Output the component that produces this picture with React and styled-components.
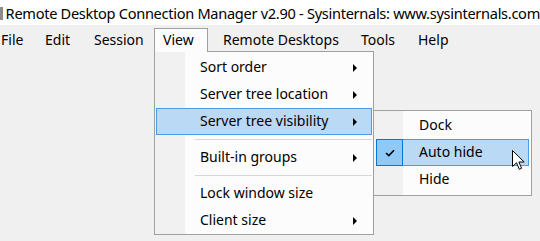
import React from 'react';
import styled, { createGlobalStyle } from 'styled-components';

const Global = createGlobalStyle`
  html, body { margin: 0; padding: 0; background: #f0f0f0; }
  body {
    width: 540px; height: 241px; overflow: hidden;
    font-family: "Segoe UI", "Noto Sans", sans-serif;
    color: #000;
  }
`;

const Window = styled.div`
  position: relative;
  width: 540px;
  height: 241px;
  display: flex;
  flex-direction: column;
  background: #f0f0f0;
  overflow: hidden;
`;

const TitleBar = styled.div`
  height: 25px;
  flex: none;
  background: #fff;
  display: flex;
  align-items: center;
`;

const AppIcon = styled.div`
  width: 4px;
  height: 13px;
  margin-top: 2px;
  background: #8c8c8c;
`;

const Title = styled.span`
  margin-left: 3px;
  font-size: 14.6px;
  letter-spacing: -0.3px;
  white-space: nowrap;
`;

const MenuBar = styled.div`
  height: 27px;
  flex: none;
  display: flex;
  align-items: flex-end;
  margin-left: -9px;
`;

const MenuItem = styled.div`
  position: relative;
  z-index: ${p => (p.$open ? 3 : 1)};
  box-sizing: border-box;
  width: ${p => p.$w}px;
  height: 24px;
  padding-left: ${p => p.$pl}px;
  padding-bottom: 2px;
  display: flex;
  align-items: center;
  font-size: 14px;
  white-space: nowrap;
  border: 1px solid ${p => (p.$open ? '#a0a0a0' : 'transparent')};
  border-bottom: none;
  background: ${p => (p.$open ? '#fcfcfc' : 'transparent')};
`;

const Dropdown = styled.div`
  position: absolute;
  z-index: 2;
  left: ${p => p.$x}px;
  top: ${p => p.$y}px;
  width: ${p => p.$w}px;
  box-sizing: border-box;
  border: 1px solid #a0a0a0;
  padding: ${p => p.$pad};
  background: linear-gradient(to right, #f1f1f1 0, #f1f1f1 ${p => p.$gutter}px, #fcfcfc ${p => p.$gutter}px);
  display: flex;
  flex-direction: column;
`;

const Item = styled.div`
  position: relative;
  box-sizing: border-box;
  height: 27px;
  margin: 0 ${p => p.$mx}px;
  padding-left: ${p => p.$pl}px;
  display: flex;
  align-items: center;
  font-size: 14px;
  white-space: nowrap;
  border: 1px solid ${p => (p.$active ? '#4a9ce6' : 'transparent')};
  background: ${p => (p.$active ? '#b9d9f5' : 'transparent')};
`;

const Label = styled.span`
  flex: 1;
  padding-bottom: 2px;
`;

const Arrow = styled.span`
  width: 0;
  height: 0;
  margin-right: 14px;
  border-top: 4px solid transparent;
  border-bottom: 4px solid transparent;
  border-left: 4px solid #000;
`;

const Separator = styled.div`
  height: 9px;
  display: flex;
  align-items: center;
  padding-left: 40px;
  &::after {
    content: '';
    flex: 1;
    height: 1px;
    background: #d7d7d7;
    margin-right: 1px;
  }
`;

const CheckCell = styled.div`
  position: absolute;
  left: -1px;
  top: -1px;
  width: 27px;
  height: 27px;
  box-sizing: border-box;
  border: 1px solid #0078d7;
  background: #90c8f6;
  display: flex;
  align-items: center;
  justify-content: center;
`;

const Cursor = styled.svg`
  position: absolute;
  z-index: 10;
  left: 512px;
  top: 150px;
`;

const MenuBarItems = [
  { label: 'File', w: 44, pl: 9 },
  { label: 'Edit', w: 49, pl: 9 },
  { label: 'Session', w: 70, pl: 9 },
  { label: 'View', w: 54, pl: 8, open: true },
  { label: 'Remote Desktops', w: 143, pl: 14 },
  { label: 'Tools', w: 57, pl: 9 },
  { label: 'Help', w: 52, pl: 9 },
];

const viewMenu = [
  { label: 'Sort order', sub: true },
  { label: 'Server tree location', sub: true },
  { label: 'Server tree visibility', sub: true, active: true },
  { sep: true },
  { label: 'Built-in groups', sub: true },
  { sep: true },
  { label: 'Lock window size' },
  { label: 'Client size', sub: true },
];

const visMenu = [
  { label: 'Dock' },
  { label: 'Auto hide', active: true, checked: true },
  { label: 'Hide' },
];

export default function App() {
  return (
    <Window>
      <Global />
      <TitleBar>
        <AppIcon />
        <Title>Remote Desktop Connection Manager v2.90 - Sysinternals: www.sysinternals.com</Title>
      </TitleBar>
      <MenuBar>
        {MenuBarItems.map(m => (
          <MenuItem key={m.label} $w={m.w} $pl={m.pl} $open={m.open}>{m.label}</MenuItem>
        ))}
      </MenuBar>

      <Dropdown $x={154} $y={51} $w={220} $pad="2px 0 0 0" $gutter={30}>
        {viewMenu.map((it, i) =>
          it.sep ? (
            <Separator key={i} />
          ) : (
            <Item key={i} $mx={1} $pl={43} $active={it.active}>
              <Label>{it.label}</Label>
              {it.sub && <Arrow />}
            </Item>
          )
        )}
      </Dropdown>

      <Dropdown $x={373} $y={110} $w={159} $pad="1px 0 2px 0" $gutter={29}>
        {visMenu.map((it, i) => (
          <Item key={i} $mx={2} $pl={42} $active={it.active}>
            {it.checked && (
              <CheckCell>
                <svg width="10" height="8" viewBox="0 0 10 8">
                  <path d="M1 4 L3.8 6.6 L9 1.2" fill="none" stroke="#000" strokeWidth="1.6" />
                </svg>
              </CheckCell>
            )}
            <Label>{it.label}</Label>
          </Item>
        ))}
      </Dropdown>

      <Cursor width="14" height="21" viewBox="0 0 14 21">
        <path
          d="M0.5 0.5 L0.5 16.5 L4.5 12.8 L7.3 19.3 L9.6 18.3 L6.9 12 L12.2 12 Z"
          fill="#fff"
          stroke="#000"
          strokeWidth="1"
          strokeLinejoin="round"
        />
      </Cursor>
    </Window>
  );
}
